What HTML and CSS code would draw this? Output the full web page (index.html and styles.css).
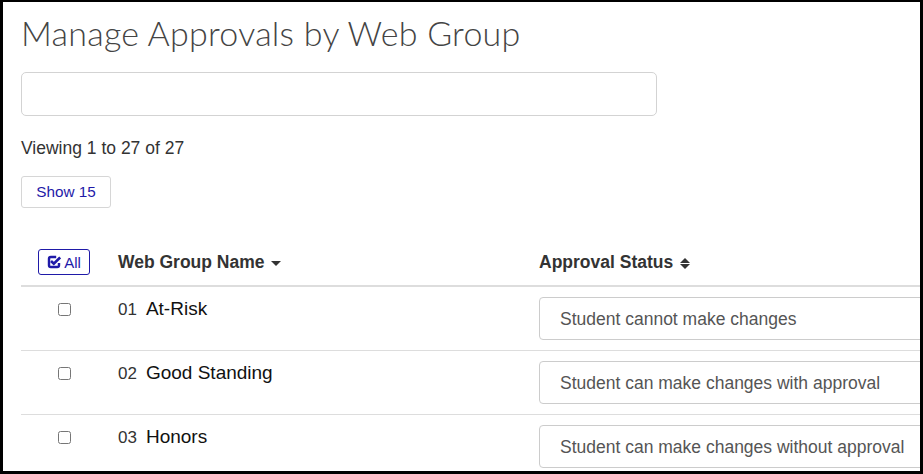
FILE: index.html
```html
<!DOCTYPE html>
<html>
<head>
<meta charset="utf-8">
<link rel="stylesheet" href="styles.css">
</head>
<body>
<div class="frame">
  <h1 class="title">Manage Approvals by Web Group</h1>
  <input class="search" type="text" aria-label="Search">
  <p class="count">Viewing 1 to 27 of 27</p>
  <button class="show">Show 15</button>
  <table class="grid">
    <thead>
      <tr>
        <th class="c-check">
          <button class="all">
            <svg class="all-icon" viewBox="0 0 16 16" width="14" height="14" aria-hidden="true">
              <path d="M10.5 2.3H4.3a2 2 0 0 0-2 2v7.4a2 2 0 0 0 2 2h7.4a2 2 0 0 0 2-2V9" fill="none" stroke="currentColor" stroke-width="2.8"/>
              <path d="M4.6 6.8l3.2 3.2L15 2.8" fill="none" stroke="currentColor" stroke-width="3"/>
            </svg>All
          </button>
        </th>
        <th class="c-name">Web Group Name <span class="caret"></span></th>
        <th class="c-status">Approval Status <span class="sort"><span class="up"></span><span class="down"></span></span></th>
      </tr>
    </thead>
    <tbody>
      <tr>
        <td class="c-check"><input type="checkbox" class="box" aria-label="Select 01"></td>
        <td class="c-name"><span class="num">01</span><span class="name">At-Risk</span></td>
        <td class="c-status"><select class="status"><option>Student cannot make changes</option></select></td>
      </tr>
      <tr>
        <td class="c-check"><input type="checkbox" class="box" aria-label="Select 02"></td>
        <td class="c-name"><span class="num">02</span><span class="name">Good Standing</span></td>
        <td class="c-status"><select class="status"><option>Student can make changes with approval</option></select></td>
      </tr>
      <tr>
        <td class="c-check"><input type="checkbox" class="box" aria-label="Select 03"></td>
        <td class="c-name"><span class="num">03</span><span class="name">Honors</span></td>
        <td class="c-status"><select class="status"><option>Student can make changes without approval</option></select></td>
      </tr>
    </tbody>
  </table>
</div>
</body>
</html>
```

FILE: styles.css
```css
html, body {
  margin: 0;
  padding: 0;
  background: #000;
}

.frame {
  box-sizing: border-box;
  width: 923px;
  height: 474px;
  border: 3px solid #000;
  border-top-width: 2px;
  background: #fff;
  overflow: hidden;
  padding: 0 0 0 18px;
  font-family: Arial, "Liberation Sans", sans-serif;
  color: #333;
}

.title {
  margin: 11px 0 0;
  font-family: Lato, "Noto Sans", sans-serif;
  font-weight: 300;
  font-size: 34px;
  line-height: 40px;
  color: #444;
  letter-spacing: 0.25px;
}

.search {
  display: block;
  box-sizing: border-box;
  width: 636px;
  height: 44px;
  margin: 19px 0 0;
  border: 1px solid #d3d3d3;
  border-radius: 5px;
  background: #fff;
  outline: none;
}

.count {
  margin: 21px 0 0;
  font-size: 17.5px;
  line-height: 22px;
  color: #333;
}

.show {
  display: block;
  box-sizing: border-box;
  margin: 17px 0 0;
  width: 90px;
  height: 32px;
  padding: 0;
  border: 1px solid #d6d6d6;
  border-radius: 3px;
  background: #fff;
  font-family: Arial, "Liberation Sans", sans-serif;
  font-size: 15.3px;
  color: #1f1aa8;
}

.grid {
  border-collapse: collapse;
  table-layout: fixed;
  width: 1000px;
  margin-top: 41px;
}

.grid th {
  text-align: left;
  vertical-align: bottom;
  padding: 0 8px 10px;
  font-size: 17.5px;
  font-weight: bold;
  color: #333;
  border-bottom: 2px solid #ddd;
  white-space: nowrap;
}

.grid td {
  vertical-align: top;
  padding: 10px 8px;
  border-bottom: 1px solid #ddd;
}

.grid .c-check {
  width: 70px;
  text-align: center;
}

.grid .c-name {
  width: 405px;
  padding-left: 11px;
}

.grid th.c-name,
.grid th.c-status {
  padding-bottom: 12px;
}

.all {
  display: inline-flex;
  align-items: center;
  gap: 3px;
  box-sizing: border-box;
  height: 26px;
  padding: 0 8px;
  border: 1px solid #1f1aa8;
  border-radius: 3px;
  background: #fff;
  font-family: Arial, "Liberation Sans", sans-serif;
  font-size: 15px;
  color: #1f1aa8;
}

.all-icon {
  display: block;
}

.caret {
  display: inline-block;
  width: 0;
  height: 0;
  margin-left: 2px;
  vertical-align: middle;
  border-left: 5px solid transparent;
  border-right: 5px solid transparent;
  border-top: 5px solid #333;
}

.sort {
  display: inline-flex;
  flex-direction: column;
  gap: 1px;
  margin-left: 2px;
  vertical-align: middle;
}

.sort .up {
  width: 0;
  height: 0;
  border-left: 5px solid transparent;
  border-right: 5px solid transparent;
  border-bottom: 5px solid #333;
}

.sort .down {
  width: 0;
  height: 0;
  border-left: 5px solid transparent;
  border-right: 5px solid transparent;
  border-top: 5px solid #333;
}

.box {
  width: 13px;
  height: 13px;
  margin: 6px 0 0;
}

td.c-name {
  line-height: 24px;
}

.num {
  font-size: 17px;
  color: #333;
}

.name {
  font-size: 19px;
  color: #111;
  margin-left: 9px;
}

.status {
  display: block;
  box-sizing: border-box;
  width: 460px;
  height: 43px;
  padding: 0 20px;
  border: 1px solid #ccc;
  border-radius: 4px;
  background: #fff;
  font-family: Arial, "Liberation Sans", sans-serif;
  font-size: 17.5px;
  color: #555;
  -webkit-appearance: none;
  appearance: none;
}
```
